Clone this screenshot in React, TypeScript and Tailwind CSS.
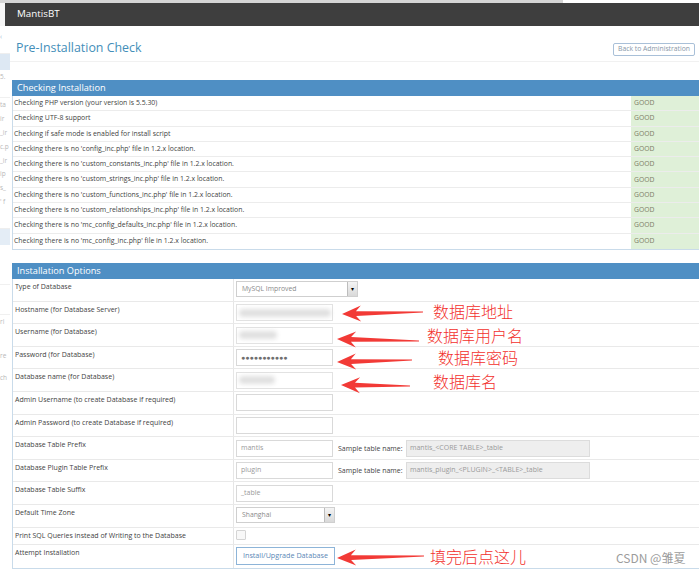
import React from 'react';

const checks = [
  "Checking PHP version (your version is 5.5.30)",
  "Checking UTF-8 support",
  "Checking if safe mode is enabled for install script",
  "Checking there is no 'config_inc.php' file in 1.2.x location.",
  "Checking there is no 'custom_constants_inc.php' file in 1.2.x location.",
  "Checking there is no 'custom_strings_inc.php' file in 1.2.x location.",
  "Checking there is no 'custom_functions_inc.php' file in 1.2.x location.",
  "Checking there is no 'custom_relationships_inc.php' file in 1.2.x location.",
  "Checking there is no 'mc_config_defaults_inc.php' file in 1.2.x location.",
  "Checking there is no 'mc_config_inc.php' file in 1.2.x location.",
];

// faint bits of the page behind, on the left edge
const sideBits: { h: number; text?: string; cls?: string }[] = [
  { h: 4 },
  { h: 10, text: '‹', cls: 'text-[#9bbbd6]' },
  { h: 14, cls: 'border-b border-[#eeeeee]' },
  { h: 16, cls: 'bg-[#dde8f3]' },
  { h: 12, text: '5.' },
  { h: 16, cls: 'border-b border-[#f0f0f0]' },
  { h: 14, text: 'ta' },
  { h: 14, text: ' ir' },
  { h: 14, text: '_ir' },
  { h: 14, text: 'c.p' },
  { h: 13, text: '_ir' },
  { h: 14, text: 'ip' },
  { h: 14, text: 's_' },
  { h: 14, text: "' f" },
  { h: 20, cls: 'border-b border-[#eeeeee]' },
  { h: 16, cls: 'bg-[#e4edf6]' },
  { h: 40, cls: 'border-b border-[#f0f0f0]' },
  { h: 30, cls: 'border-b border-[#f0f0f0]' },
  { h: 34, text: 'ri' },
  { h: 22, text: 're' },
  { h: 80, text: 'ch' },
];

function Arrow({ tip, tail }: { tip: [number, number]; tail: [number, number] }) {
  const dx = tail[0] - tip[0];
  const dy = tail[1] - tip[1];
  const len = Math.hypot(dx, dy);
  const ux = dx / len, uy = dy / len;
  const nx = -uy, ny = ux;
  const L = 19, W = 8, S = 2.4, N = 14;
  const p = (a: number, b: number) => `${(tip[0] + ux * a + nx * b).toFixed(1)},${(tip[1] + uy * a + ny * b).toFixed(1)}`;
  const pts = [
    p(0, 0),
    p(L, W),
    p(N, S),
    p(len, 0.4),
    p(len, -0.4),
    p(N, -S),
    p(L, -W),
  ].join(' ');
  return <polygon points={pts} fill="#f23a36" />;
}

function TextInput({ value, muted = true }: { value?: string; muted?: boolean }) {
  return (
    <div className={`w-[97px] shrink-0 h-[17px] border border-[#d9d9d9] bg-white flex items-center pl-[4px] text-[7px] ${muted ? 'text-[#9a9a9a]' : 'text-[#6f6f6f]'}`}>
      {value}
    </div>
  );
}

function Blurred({ w }: { w: number }) {
  return (
    <div className="w-[97px] h-[17px] border border-[#e2e2e2] bg-white flex items-center pl-[2px]">
      <div className="h-[8px] rounded-full bg-[#e0e0e0] blur-[2px]" style={{ width: w }} />
    </div>
  );
}

function Select({ value, w }: { value: string; w: string }) {
  return (
    <div className={`${w} h-[16px] border border-[#cfcfcf] bg-white flex items-center text-[6.8px] text-[#8a8a8a]`}>
      <span className="flex-1 pl-[5px]">{value}</span>
      <span className="w-[10px] h-full border-l border-[#bdbdbd] bg-gradient-to-b from-[#f4f4f4] to-[#d9d9d9] flex items-center justify-center text-[6px] text-black leading-none">▾</span>
    </div>
  );
}

function Sample({ value }: { value: string }) {
  return (
    <>
      <span className="w-[73px] shrink-0 pl-[5px] mt-[5px] text-[7px] leading-[8px] text-[#444] whitespace-nowrap">Sample table name:</span>
      <div className="w-[184px] shrink-0 h-[17px] border border-[#dcdcdc] bg-[#eeeeee] flex items-center pl-[3px] text-[7px] text-[#9a9a9a]">{value}</div>
    </>
  );
}

function OptRow({ label, h = 'h-[22.6px]', children }: { label: string; h?: string; children?: React.ReactNode }) {
  return (
    <div className={`flex ${h} border-b border-[#e9e9e9]`}>
      <div className="w-[221px] shrink-0 border-r border-[#e6e6e6] pl-[2px] pt-[3px] leading-[10px] text-[7px] text-[#3f3f3f]">{label}</div>
      <div className="flex-1 flex items-start pl-[2px] pt-[2.5px]">{children}</div>
    </div>
  );
}

export default function App() {
  return (
    <div className="relative w-[699px] h-[574px] overflow-hidden bg-white font-['Open_Sans',sans-serif]">
      {/* top strip + navbar */}
      <div className="h-[3px] flex">
        <div className="w-[563px] bg-[#d5d5d5]" />
      </div>
      <div className="flex h-[23px]">
        <div className="w-[5px] bg-[#f6f6f6]" />
        <div className="flex-1 bg-[#3e3e3e] flex items-center pl-[12px] text-[9.8px] text-white">MantisBT</div>
      </div>

      <div className="flex">
        <aside className="w-[10px] shrink-0 overflow-hidden flex flex-col text-[6.5px] text-[#b8b8b8] leading-[10px]">
          {sideBits.map((b, i) => (
            <div key={i} className={`shrink-0 whitespace-nowrap pt-[2px] ${b.cls ?? ''}`} style={{ height: b.h }}>
              {b.text}
            </div>
          ))}
        </aside>

        <main className="flex-1">
          {/* page title */}
          <div className="h-[36px] flex items-start justify-between border-b border-[#f1f1f1] pl-[6px] pr-[4px]">
            <h1 className="mt-[14px] text-[12.4px] leading-[16px] text-[#438eb9]">Pre-Installation Check</h1>
            <button className="mt-[17px] h-[13px] px-[4px] border border-[#a9c0d8] rounded-[2px] text-[6.8px] leading-none text-[#8797a8]">Back to Administration</button>
          </div>

          {/* checking installation */}
          <section className="mt-[18px] ml-[2px]">
            <div className="h-[16px] bg-[#4f8fc4] flex items-center pl-[5px] text-[9.2px] text-white">Checking Installation</div>
            <div className="border-l border-b border-[#c9dbea]">
              {checks.map((c) => (
                <div key={c} className="flex h-[15.3px] border-b border-[#ececec] last:border-b-0">
                  <div className="flex-1 flex items-center pl-[1px] text-[6.9px] text-[#3f3f3f]">{c}</div>
                  <div className="w-[68px] bg-[#dff0d8] flex items-center pl-[3px] text-[6.8px] text-[#7d7d66]">GOOD</div>
                </div>
              ))}
            </div>
          </section>

          {/* installation options */}
          <section className="mt-[13px] ml-[2px]">
            <div className="h-[16px] bg-[#4f8fc4] flex items-center pl-[5px] text-[9.2px] text-white">Installation Options</div>
            <div className="border-l border-b border-[#c9dbea]">
              <OptRow label="Type of Database">
                <Select value="MySQL Improved" w="w-[122px]" />
              </OptRow>
              <OptRow label="Hostname (for Database Server)">
                <Blurred w={92} />
              </OptRow>
              <OptRow label="Username (for Database)">
                <Blurred w={38} />
              </OptRow>
              <OptRow label="Password (for Database)">
                <TextInput value="●●●●●●●●●●●" muted={false} />
              </OptRow>
              <OptRow label="Database name (for Database)">
                <Blurred w={36} />
              </OptRow>
              <OptRow label="Admin Username (to create Database if required)">
                <TextInput />
              </OptRow>
              <OptRow label="Admin Password (to create Database if required)">
                <TextInput />
              </OptRow>
              <OptRow label="Database Table Prefix">
                <TextInput value="mantis" />
                <Sample value="mantis_<CORE TABLE>_table" />
              </OptRow>
              <OptRow label="Database Plugin Table Prefix">
                <TextInput value="plugin" />
                <Sample value="mantis_plugin_<PLUGIN>_<TABLE>_table" />
              </OptRow>
              <OptRow label="Database Table Suffix">
                <TextInput value="_table" />
              </OptRow>
              <OptRow label="Default Time Zone">
                <Select value="Shanghai" w="w-[99px]" />
              </OptRow>
              <OptRow label="Print SQL Queries instead of Writing to the Database" h="h-[17px]">
                <div className="w-[10px] h-[10px] border border-[#d4d4d4] bg-[#f8f8f8] rounded-[1px]" />
              </OptRow>
              <div className="flex h-[23px]">
                <div className="w-[221px] shrink-0 border-r border-[#e6e6e6] pl-[2px] pt-[3px] leading-[10px] text-[7px] text-[#3f3f3f]">Attempt Installation</div>
                <div className="flex-1 flex items-start pl-[2px] pt-[2px]">
                  <button className="w-[99px] h-[18px] border border-[#8db4d8] bg-white text-[7.2px] leading-none text-[#5a88b6]">Install/Upgrade Database</button>
                </div>
              </div>
            </div>
          </section>
        </main>
      </div>

      {/* annotations */}
      <svg className="absolute inset-0 pointer-events-none" width="699" height="574">
        <Arrow tip={[342, 314]} tail={[423, 312]} />
        <Arrow tip={[337, 339]} tail={[419, 341]} />
        <Arrow tip={[337, 362]} tail={[412, 360]} />
        <Arrow tip={[341, 385]} tail={[410, 386]} />
        <Arrow tip={[337, 558]} tail={[424, 556]} />
      </svg>
      <div className="absolute left-[433px] top-[302px] text-[16px] leading-[18px] text-[#f2302c] font-['Noto_Sans_CJK_SC',sans-serif] font-light">数据库地址</div>
      <div className="absolute left-[427px] top-[326px] text-[16px] leading-[18px] text-[#f2302c] font-['Noto_Sans_CJK_SC',sans-serif] font-light">数据库用户名</div>
      <div className="absolute left-[438px] top-[348px] text-[16px] leading-[18px] text-[#f2302c] font-['Noto_Sans_CJK_SC',sans-serif] font-light">数据库密码</div>
      <div className="absolute left-[433px] top-[372px] text-[16px] leading-[18px] text-[#f2302c] font-['Noto_Sans_CJK_SC',sans-serif] font-light">数据库名</div>
      <div className="absolute left-[430px] top-[547px] text-[16px] leading-[18px] text-[#f2302c] font-['Noto_Sans_CJK_SC',sans-serif] font-light">填完后点这儿</div>
      <div className="absolute left-[616px] top-[550px] text-[12px] leading-[16px] text-[#9c9c9c] font-['Noto_Sans_CJK_SC',sans-serif]">CSDN @雏夏</div>
    </div>
  );
}
